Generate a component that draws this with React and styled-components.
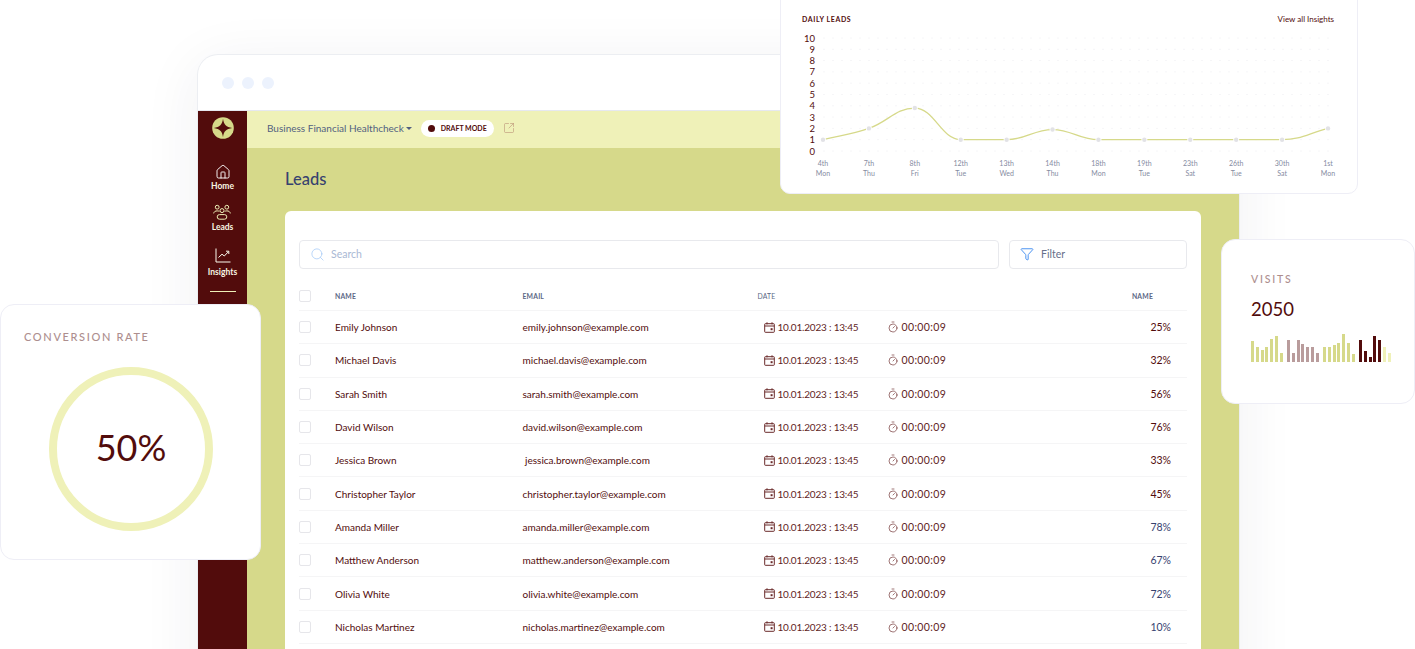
import React from 'react';
import styled, { createGlobalStyle } from 'styled-components';
import { House, Search, Funnel, Timer, SquareArrowOutUpRight } from 'lucide-react';

const MAROON = '#520c0c';
const LIME = '#d6d98a';
const PALE = '#eff1b8';
const NAVY = '#36426f';
const FONT = '"Lato", "Noto Sans", sans-serif';

const leads = [
    ['Emily Johnson', 'emily.johnson@example.com', '25%'],
    ['Michael Davis', 'michael.davis@example.com', '32%'],
    ['Sarah Smith', 'sarah.smith@example.com', '56%'],
    ['David Wilson', 'david.wilson@example.com', '76%'],
    ['Jessica Brown', ' jessica.brown@example.com', '33%'],
    ['Christopher Taylor', 'christopher.taylor@example.com', '45%'],
    ['Amanda Miller', 'amanda.miller@example.com', '78%', true],
    ['Matthew Anderson', 'matthew.anderson@example.com', '67%', true],
    ['Olivia White', 'olivia.white@example.com', '72%', true],
    ['Nicholas Martinez', 'nicholas.martinez@example.com', '10%', true],
];

const ticks = [
    ['4th', 'Mon', 1], ['7th', 'Thu', 2], ['8th', 'Fri', 3.8], ['12th', 'Tue', 1],
    ['13th', 'Wed', 1], ['14th', 'Thu', 1.9], ['18th', 'Mon', 1], ['19th', 'Tue', 1],
    ['23th', 'Sat', 1], ['26th', 'Tue', 1], ['30th', 'Sat', 1], ['1st', 'Mon', 2],
];

const barGroups = [
    { color: LIME, bars: [21, 15, 12, 15, 23, 26, 9] },
    { color: '#b99c9c', bars: [22, 9, 22, 18, 15, 15, 9] },
    { color: LIME, bars: [15, 15, 17, 19, 28, 19, 8] },
    { color: MAROON, bars: [22, 11, 5, 26, 22], rest: [15, 9] },
];

const Logo = () => (
    <svg width="22" height="22" viewBox="0 0 22 22">
        <circle cx="11" cy="11" r="10.8" fill={LIME} />
        <path d="M11 1.8C11.8 7.8 14.2 10.2 20.2 11 14.2 11.8 11.8 14.2 11 20.2 10.2 14.2 7.8 11.8 1.8 11 7.8 10.2 10.2 7.8 11 1.8Z" fill={MAROON} />
    </svg>
);

const PeopleIcon = () => (
    <svg width="18" height="16" viewBox="0 0 18 16" fill="none" stroke={PALE} strokeWidth="1">
        <circle cx="4.2" cy="3.2" r="1.9" />
        <circle cx="13.8" cy="3.2" r="1.9" />
        <circle cx="9" cy="6.6" r="2" />
        <path d="M.7 9.4C1 7.5 2.4 6.9 4.2 6.9 5 6.9 5.7 7 6.3 7.4M17.3 9.4C17 7.5 15.6 6.9 13.8 6.9 13 6.9 12.3 7 11.7 7.4" />
        <rect x="4.2" y="10.6" width="9.6" height="4.6" rx="2.3" />
    </svg>
);

const TrendIcon = () => (
    <svg width="16" height="15" viewBox="0 0 16 15" fill="none" stroke="#fbfbee" strokeWidth="1">
        <path d="M1 .5V14H15.5" />
        <path d="M3.5 9.5 7 6.2 9.3 8 13.5 3.6M11 3.2H13.8V6" />
    </svg>
);

const CalendarIcon = () => (
    <svg width="11" height="11" viewBox="0 0 11 11" fill="none" stroke="#6a2a2a" strokeWidth="1">
        <rect x=".7" y="1.7" width="9.6" height="8.6" rx=".6" />
        <path d="M.7 4H10.3M3 .3V2.4M8 .3V2.4" />
        <rect x="6.6" y="6.2" width="2" height="2" fill="#6a2a2a" stroke="none" />
    </svg>
);

const Chart = () => {
    const x = i => 42 + i * 45.91;
    const y = v => 151 - v * 11.3;
    const pts = ticks.map((t, i) => [x(i), y(t[2])]);
    const slopes = pts.slice(1).map((p, i) => (p[1] - pts[i][1]) / (p[0] - pts[i][0]));
    // monotone tangents: flat on a peak or a plateau, straight-ish on a climb
    const tangents = pts.map((_, i) => {
        if (i === 0) return slopes[0];
        if (i === pts.length - 1) return slopes[i - 1];
        if (slopes[i - 1] * slopes[i] <= 0) return 0;
        return (slopes[i - 1] + slopes[i]) / 2;
    });
    const line = pts.reduce((d, p, i) => {
        if (i === 0) return `M${p[0]} ${p[1]}`;
        const prev = pts[i - 1];
        const dx = (p[0] - prev[0]) * 0.42;
        return `${d} C${prev[0] + dx} ${prev[1] + tangents[i - 1] * dx} ${p[0] - dx} ${p[1] - tangents[i] * dx} ${p[0]} ${p[1]}`;
    }, '');
    return (
        <ChartSvg width="578" height="194" viewBox="0 0 578 194">
            {[...Array(11)].map((_, v) => (
                <g key={v}>
                    <AxisText x="34" y={y(v) + 3.5} textAnchor="end">{v}</AxisText>
                    <line x1="42" x2="551" y1={y(v)} y2={y(v)} stroke="#f6f6f8" strokeWidth="1" strokeDasharray="2 7" />
                </g>
            ))}
            <path d={line} fill="none" stroke={LIME} strokeWidth="1.3" />
            {ticks.map((t, i) => (
                <g key={t[0]}>
                    <circle cx={x(i)} cy={y(t[2])} r="2.2" fill="#e2e2e6" stroke="#fff" strokeWidth="1.6" paintOrder="stroke" />
                    <TickText x={x(i)} y="165.5" textAnchor="middle">{t[0]}</TickText>
                    <TickText x={x(i)} y="175.5" textAnchor="middle">{t[1]}</TickText>
                </g>
            ))}
        </ChartSvg>
    );
};

const App = () => (
    <Page>
        <GlobalStyle />
        <BrowserWindow>
            <TitleBar>
                <Dot /><Dot /><Dot />
            </TitleBar>
            <Body>
                <Sidebar>
                    <LogoCell><Logo /></LogoCell>
                    <NavItem $top={15.5} $gap={1.5}><House size={16} strokeWidth={1.4} color="#fff" /><span>Home</span></NavItem>
                    <NavItem $top={13} $gap={2}><PeopleIcon /><span>Leads</span></NavItem>
                    <NavItem $top={15.5} $gap={4.5}><TrendIcon /><span>Insights</span></NavItem>
                    <NavRule />
                </Sidebar>
                <Main>
                    <TopBar>
                        <Project>Business Financial Healthcheck</Project>
                        <Caret />
                        <DraftPill><DraftDot />DRAFT MODE</DraftPill>
                        <SquareArrowOutUpRight size={12} strokeWidth={1.1} color="#b5876f" />
                    </TopBar>
                    <Content>
                        <PageTitle>Leads</PageTitle>
                        <TableCard>
                            <Controls>
                                <SearchBox>
                                    <Search size={15} strokeWidth={1.2} color="#a4c9f7" />
                                    <span>Search</span>
                                </SearchBox>
                                <FilterBox>
                                    <Funnel size={14} strokeWidth={1.6} color="#3f8cf0" />
                                    <span>Filter</span>
                                </FilterBox>
                            </Controls>
                            <HeadRow>
                                <Check />
                                <HeadCell>NAME</HeadCell>
                                <HeadCell>EMAIL</HeadCell>
                                <HeadCell>DATE</HeadCell>
                                <HeadCell $right>NAME</HeadCell>
                            </HeadRow>
                            {leads.map(([name, email, pct, blue]) => (
                                <Row key={name}>
                                    <Check />
                                    <Cell>{name}</Cell>
                                    <Cell>{email}</Cell>
                                    <Stamp>
                                        <CalendarIcon />
                                        <span>10.01.2023 : 13:45</span>
                                    </Stamp>
                                    <Duration>
                                        <Timer size={12} strokeWidth={1.3} color="#6a2a2a" />
                                        <span>00:00:09</span>
                                    </Duration>
                                    <Percent $blue={blue}>{pct}</Percent>
                                </Row>
                            ))}
                        </TableCard>
                    </Content>
                </Main>
            </Body>
        </BrowserWindow>

        <DailyCard>
            <DailyHead>
                <DailyTitle>DAILY LEADS</DailyTitle>
                <InsightsLink>View all Insights</InsightsLink>
            </DailyHead>
            <Chart />
        </DailyCard>

        <VisitsCard>
            <CardLabel>VISITS</CardLabel>
            <VisitsValue>2050</VisitsValue>
            <Bars>
                {barGroups.map((g, i) => (
                    <BarGroup key={i}>
                        {g.bars.map((h, j) => <Bar key={j} $color={g.color} style={{ height: h }} />)}
                        {g.rest && g.rest.map((h, j) => <Bar key={j} $color={PALE} style={{ height: h }} />)}
                    </BarGroup>
                ))}
            </Bars>
        </VisitsCard>

        <ConversionCard>
            <CardLabel>CONVERSION RATE</CardLabel>
            <Ring>50%</Ring>
        </ConversionCard>
    </Page>
);

const GlobalStyle = createGlobalStyle`
    html, body {
        margin: 0;
        background: #fff;
        font-family: ${FONT};
    }
    * {
        box-sizing: border-box;
    }
`;

const Page = styled.div`
    position: relative;
    width: 1415px;
    height: 649px;
    overflow: hidden;
    padding: 55px 0 0 198px;
`;

const BrowserWindow = styled.div`
    width: 1041px;
    height: 700px;
    border-radius: 20px 20px 0 0;
    background: #fff;
    box-shadow: 0 0 0 1px #eceef2, 0 10px 60px rgba(40, 40, 70, 0.07);
    overflow: hidden;
`;

const TitleBar = styled.div`
    height: 56px;
    display: flex;
    align-items: center;
    gap: 8px;
    padding-left: 24px;
    border-bottom: 1px solid #e6e8f0;
`;

const Dot = styled.span`
    width: 12px;
    height: 12px;
    border-radius: 50%;
    background: #ecf2fd;
`;

const Body = styled.div`
    display: flex;
    height: 644px;
`;

const Sidebar = styled.nav`
    width: 49px;
    flex: none;
    background: ${MAROON};
    display: flex;
    flex-direction: column;
    align-items: center;
`;

const LogoCell = styled.div`
    height: 37px;
    width: 100%;
    display: flex;
    align-items: center;
    justify-content: center;
    padding-bottom: 3px;
`;

const NavItem = styled.div`
    display: flex;
    flex-direction: column;
    align-items: center;
    gap: ${p => p.$gap}px;
    margin-top: ${p => p.$top}px;
    color: #f8f6e2;
    font-size: 8.5px;
    font-weight: 700;
    line-height: 10px;
`;

const NavRule = styled.div`
    width: 26px;
    height: 1px;
    margin-top: 14px;
    background: ${PALE};
`;

const Main = styled.div`
    flex: 1;
    background: ${LIME};
`;

const TopBar = styled.div`
    height: 37px;
    padding: 0 0 3px 20px;
    background: ${PALE};
    display: flex;
    align-items: center;
    svg {
        margin-left: 9px;
    }
`;

const Project = styled.span`
    color: #525f80;
    font-size: 10px;
`;

const Caret = styled.span`
    width: 0;
    height: 0;
    margin: 1px 0 0 2px;
    border-left: 3px solid transparent;
    border-right: 3px solid transparent;
    border-top: 3.5px solid #525f80;
`;

const DraftPill = styled.span`
    display: flex;
    align-items: center;
    gap: 6px;
    width: 73px;
    height: 17px;
    margin-left: 9px;
    padding-left: 7px;
    border-radius: 9px;
    background: #fff;
    color: ${MAROON};
    font-size: 7px;
    font-weight: 700;
    white-space: nowrap;
`;

const DraftDot = styled.i`
    flex: none;
    width: 7px;
    height: 7px;
    border-radius: 50%;
    background: ${MAROON};
`;

const Content = styled.div`
    padding: 21px 38px 0;
`;

const PageTitle = styled.h1`
    margin: 0 0 21px;
    height: 21px;
    color: ${NAVY};
    font-size: 16.5px;
    font-weight: 500;
    line-height: 21px;
`;

const TableCard = styled.div`
    width: 916px;
    min-height: 520px;
    padding: 29px 14px 0;
    border-radius: 6px 6px 0 0;
    background: #fff;
`;

const Controls = styled.div`
    display: flex;
    gap: 10px;
    margin-bottom: 20px;
`;

const SearchBox = styled.div`
    flex: 1;
    height: 29px;
    display: flex;
    align-items: center;
    gap: 6px;
    padding: 0 0 1px 10px;
    border: 1px solid #e8e9ed;
    border-radius: 4px;
    color: #a9b8d4;
    font-size: 10.5px;
`;

const FilterBox = styled(SearchBox)`
    flex: none;
    width: 178px;
    gap: 7px;
    color: #66708a;
`;

const HeadRow = styled.div`
    display: grid;
    grid-template-columns: 36px 187.5px 235px 1fr 1fr;
    align-items: center;
    height: 22px;
    padding-bottom: 8px;
    border-bottom: 1px solid #f5f5f6;
`;

const Check = styled.span`
    width: 12px;
    height: 12px;
    border: 1px solid #e6e6ea;
    border-radius: 2px;
`;

const HeadCell = styled.span`
    color: #5b6785;
    font-size: 6.8px;
    font-weight: 700;
    letter-spacing: 0.2px;
    text-align: ${p => (p.$right ? 'right' : 'left')};
    padding-right: ${p => (p.$right ? 34 : 0)}px;
    &:nth-child(4) {
        font-weight: 400;
    }
`;

const Row = styled.div`
    display: grid;
    grid-template-columns: 36px 187.5px 235px 129.5px 200px 1fr;
    align-items: center;
    height: 33.3px;
    border-bottom: 1px solid #f5f5f6;
`;

const Cell = styled.span`
    color: ${MAROON};
    font-size: 10px;
    white-space: pre;
`;

const Stamp = styled.span`
    display: flex;
    align-items: center;
    gap: 2.5px;
    padding-left: 6.5px;
    color: #5f1e1e;
    font-size: 10px;
    letter-spacing: -0.2px;
    white-space: nowrap;
`;

const Duration = styled(Stamp)`
    padding-left: 0;
    font-size: 10.5px;
    letter-spacing: 0.35px;
`;

const Percent = styled.span`
    color: ${p => (p.$blue ? NAVY : MAROON)};
    font-size: 10.5px;
    text-align: right;
    padding-right: 16px;
`;

const FloatingCard = styled.div`
    position: absolute;
    background: #fff;
    border: 1px solid #eeeef6;
`;

const DailyCard = styled(FloatingCard)`
    left: 780px;
    top: -1px;
    width: 578px;
    height: 195px;
    border-radius: 0 0 10px 10px;
`;

const DailyHead = styled.div`
    display: flex;
    justify-content: space-between;
    align-items: center;
    padding: 14px 23px 0 21px;
`;

const DailyTitle = styled.span`
    color: ${MAROON};
    font-size: 7px;
    font-weight: 700;
    letter-spacing: 0.6px;
`;

const InsightsLink = styled.span`
    color: ${MAROON};
    font-size: 8px;
`;

const ChartSvg = styled.svg`
    position: absolute;
    left: 0;
    top: 0;
`;

const AxisText = styled.text`
    fill: ${MAROON};
    font-family: ${FONT};
    font-size: 9.5px;
`;

const TickText = styled.text`
    fill: #858b9f;
    font-family: ${FONT};
    font-size: 7px;
`;

const VisitsCard = styled(FloatingCard)`
    left: 1221px;
    top: 239px;
    width: 194px;
    height: 165px;
    padding: 32px 0 0 29px;
    border-radius: 14px;
`;

const CardLabel = styled.div`
    color: #ad8e8e;
    font-size: 10.5px;
    font-weight: 500;
    letter-spacing: 1.8px;
    line-height: 14px;
`;

const VisitsValue = styled.div`
    margin-top: 12px;
    color: ${MAROON};
    font-size: 18.5px;
    line-height: 22px;
`;

const Bars = styled.div`
    display: flex;
    align-items: flex-end;
    gap: 4.2px;
    height: 28px;
    margin-top: 14px;
`;

const BarGroup = styled.div`
    display: flex;
    align-items: flex-end;
    gap: 1.8px;
`;

const Bar = styled.span`
    width: 3px;
    background: ${p => p.$color};
`;

const ConversionCard = styled(FloatingCard)`
    left: 0;
    top: 304px;
    width: 261px;
    height: 256px;
    padding: 25px 0 0 23px;
    border-radius: 14px;
    ${CardLabel} {
        font-size: 11px;
        letter-spacing: 1.65px;
    }
`;

const Ring = styled.div`
    width: 164px;
    height: 164px;
    margin: 23px 0 0 25px;
    padding-bottom: 4px;
    display: flex;
    align-items: center;
    justify-content: center;
    border: 8px solid ${PALE};
    border-radius: 50%;
    color: ${MAROON};
    font-size: 36px;
`;

export default App;
